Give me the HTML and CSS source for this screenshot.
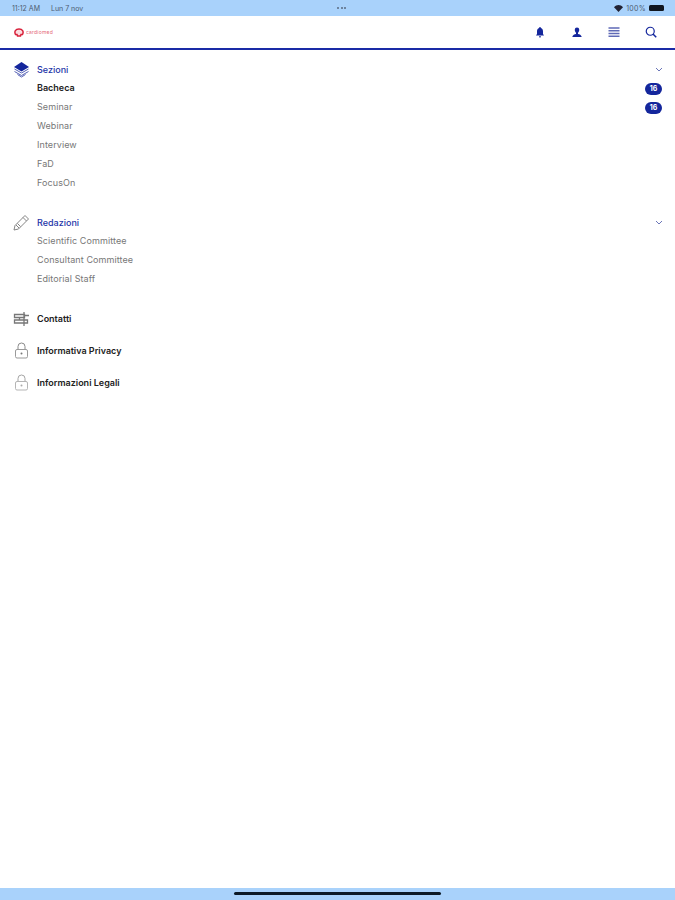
FILE: index.html
```html
<!DOCTYPE html>
<html lang="en">
<head>
    <meta charset="UTF-8">
    <meta name="viewport" content="width=device-width, initial-scale=1.0">
    <title>Menu</title>
    <link rel="stylesheet" href="styles.css">
</head>
<body>

<div class="status-bar">
    <div class="status-left"><span>11:12 AM</span><span>Lun 7 nov</span></div>
    <div class="status-dots"><i></i><i></i><i></i></div>
    <div class="status-right">
        <svg width="9" height="7" viewBox="0 0 18 14"><path d="M9 14L0 4.500C5 -1.200 13 -1.200 18 4.500z" fill="#223"/></svg>
        <span>100%</span>
        <div class="battery"></div>
    </div>
</div>

<div class="top-bar">
    <div class="logo">
        <svg width="10" height="9" viewBox="0 0 20 18"><path d="M3 13C0 7 3 2 10 2s10 5 7 11h-3l-1 3H7l-1-3z" fill="#fbdde1" stroke="#d8203a" stroke-width="3"/></svg>
        <span class="logo-text">cardiomed</span>
    </div>
    <div class="top-icons">
        <svg width="12" height="12" viewBox="0 0 24 24"><path d="M12 2c1.200 0 1.800.8 1.800 1.800 3 1 4.200 3.700 4.200 7.200v5l2 3H4l2-3v-5c0-3.500 1.200-6.200 4.200-7.200C10.200 2.800 10.800 2 12 2zM10 20.500h4c0 1.500-.8 2.500-2 2.500s-2-1-2-2.500z" fill="#14269c"/></svg>
        <svg width="12" height="12" viewBox="0 0 24 24"><path d="M12 3a4.500 4.500 0 0 1 4.500 4.500c0 2.700-1.300 5-2.500 6v2.500c3 .5 6.500 2 7.500 6h-19c1-4 4.500-5.500 7.500-6v-2.500c-1.200-1-2.500-3.300-2.500-6A4.500 4.500 0 0 1 12 3z" fill="#14269c"/></svg>
        <svg width="12" height="12" viewBox="0 0 24 24"><path d="M1 4h22M1 9.500h22M1 15h22M1 20.500h22" stroke="#5f6ab6" stroke-width="3"/></svg>
        <svg width="12" height="12" viewBox="0 0 24 24"><circle cx="10.500" cy="10.500" r="8" fill="none" stroke="#14269c" stroke-width="2.400"/><path d="M16 16l6.500 6.500" stroke="#14269c" stroke-width="3"/></svg>
    </div>
</div>

<div class="menu">
    <div class="group">
        <div class="row group-title">
            <svg class="row-icon" width="17" height="17" viewBox="0 0 34 34">
                <path d="M17 2L32 12 17 21 2 12z" fill="#14269c"/>
                <path d="M3 16l14 8 14-8M3 21l14 8 14-8M9 27l8 5 8-5" fill="none" stroke="#5561b5" stroke-width="2"/>
            </svg>
            <span class="label">Sezioni</span>
            <svg class="chevron" width="8" height="5" viewBox="0 0 16 10"><path d="M2 2l6 6 6-6" fill="none" stroke="#5a66b0" stroke-width="1.800"/></svg>
        </div>
        <div class="row item active"><span class="label">Bacheca</span><span class="badge">16</span></div>
        <div class="row item"><span class="label">Seminar</span><span class="badge">16</span></div>
        <div class="row item"><span class="label">Webinar</span></div>
        <div class="row item"><span class="label">Interview</span></div>
        <div class="row item"><span class="label">FaD</span></div>
        <div class="row item"><span class="label">FocusOn</span></div>
    </div>

    <div class="group">
        <div class="row group-title">
            <svg class="row-icon" width="17" height="17" viewBox="0 0 34 34">
                <path d="M24 3l7 7L11 30l-9 2 2-9zM20 7l7 7M6 22l6 6M9 19l6 6" fill="none" stroke="#777" stroke-width="1.800" stroke-linejoin="round"/>
            </svg>
            <span class="label">Redazioni</span>
            <svg class="chevron" width="8" height="5" viewBox="0 0 16 10"><path d="M2 2l6 6 6-6" fill="none" stroke="#5a66b0" stroke-width="1.800"/></svg>
        </div>
        <div class="row item"><span class="label">Scientific Committee</span></div>
        <div class="row item"><span class="label">Consultant Committee</span></div>
        <div class="row item"><span class="label">Editorial Staff</span></div>
    </div>

    <div class="links">
        <div class="row link">
            <svg class="row-icon" width="17" height="17" viewBox="0 0 34 34">
                <path d="M3 9h20v6H3zM23 11h9M3 20h26v6H3zM22 4v28M13 15v5" fill="none" stroke="#777" stroke-width="2.600"/>
            </svg>
            <span class="label">Contatti</span>
        </div>
        <div class="row link">
            <svg class="row-icon" width="17" height="17" viewBox="0 0 34 34">
                <path d="M10 15V9a7 7 0 0 1 14 0v6" fill="none" stroke="#8a8a8a" stroke-width="2"/>
                <rect x="5" y="15" width="24" height="17" rx="3" fill="none" stroke="#9a9a9a" stroke-width="2"/>
                <circle cx="17" cy="23" r="2" fill="#777"/>
            </svg>
            <span class="label">Informativa Privacy</span>
        </div>
        <div class="row link">
            <svg class="row-icon" width="17" height="17" viewBox="0 0 34 34">
                <path d="M10 15V9a7 7 0 0 1 14 0v6" fill="none" stroke="#a5a5a5" stroke-width="2"/>
                <rect x="5" y="15" width="24" height="17" rx="3" fill="none" stroke="#b5b5b5" stroke-width="2"/>
                <circle cx="17" cy="23" r="2" fill="#aaa"/>
            </svg>
            <span class="label">Informazioni Legali</span>
        </div>
    </div>
</div>

<div class="home-bar"><div class="home-indicator"></div></div>

</body>
</html>
```

FILE: styles.css
```css
* {
    box-sizing: border-box;
}

body {
    margin: 0;
    height: 900px;
    display: flex;
    flex-direction: column;
    background: #fff;
    font-family: Inter, "Liberation Sans", sans-serif;
    overflow: hidden;
}

.status-bar {
    height: 16px;
    background: #a9d2fb;
    display: flex;
    justify-content: space-between;
    align-items: center;
    padding: 0 11px 0 12px;
    font-size: 7px;
    color: #4d5b70;
}

.status-left {
    display: flex;
    gap: 11px;
}

.status-dots {
    display: flex;
    gap: 1.500px;
    margin-left: -14px;
}

.status-dots i {
    width: 2px;
    height: 2px;
    border-radius: 50%;
    background: #5a6a80;
}

.status-right {
    display: flex;
    align-items: center;
    gap: 3px;
    letter-spacing: 0.300px;
}

.battery {
    width: 15px;
    height: 6px;
    border-radius: 1.500px;
    background: #11161f;
}

.top-bar {
    height: 34px;
    border-bottom: 2px solid #1a2ba6;
    display: flex;
    justify-content: space-between;
    align-items: center;
    padding: 0 18px 0 14px;
}

.logo {
    display: flex;
    align-items: center;
    gap: 2px;
}

.logo-text {
    font-size: 5px;
    letter-spacing: 0.200px;
    color: #d8203a;
    opacity: 0.7;
}

.top-icons {
    display: flex;
    gap: 25px;
}

.menu {
    flex: 1;
    padding-top: 10px;
}

.group {
    margin-bottom: 20px;
}

.row {
    height: 19px;
    display: flex;
    align-items: center;
    padding-left: 37px;
    padding-right: 13px;
    font-size: 9px;
    color: #777;
}

.row .label {
    flex: 1;
}

.row-icon {
    margin-left: -24px;
    margin-right: 7px;
    flex-shrink: 0;
}

.group-title {
    color: #2435a8;
    font-weight: 500;
}

.chevron {
    margin-right: -1px;
}

.item {
    padding-bottom: 2px;
    letter-spacing: 0.080px;
}

.item.active {
    color: #222;
    font-weight: 600;
    letter-spacing: 0;
}

.item .badge {
    margin-bottom: -2px;
}

.badge {
    width: 17px;
    height: 12px;
    border-radius: 6px;
    background: #14269c;
    color: #fff;
    font-size: 7px;
    font-weight: 700;
    display: flex;
    justify-content: center;
    align-items: center;
}

.links {
    display: flex;
    flex-direction: column;
    gap: 13px;
}

.link {
    padding-bottom: 1px;
    color: #222;
    font-weight: 600;
}

.link .row-icon {
    margin-bottom: -1px;
}

.home-bar {
    height: 12px;
    background: #a9d2fb;
    display: flex;
    justify-content: center;
    padding-top: 4px;
}

.home-indicator {
    width: 207px;
    height: 3px;
    border-radius: 2px;
    background: #0d1a26;
}
```
